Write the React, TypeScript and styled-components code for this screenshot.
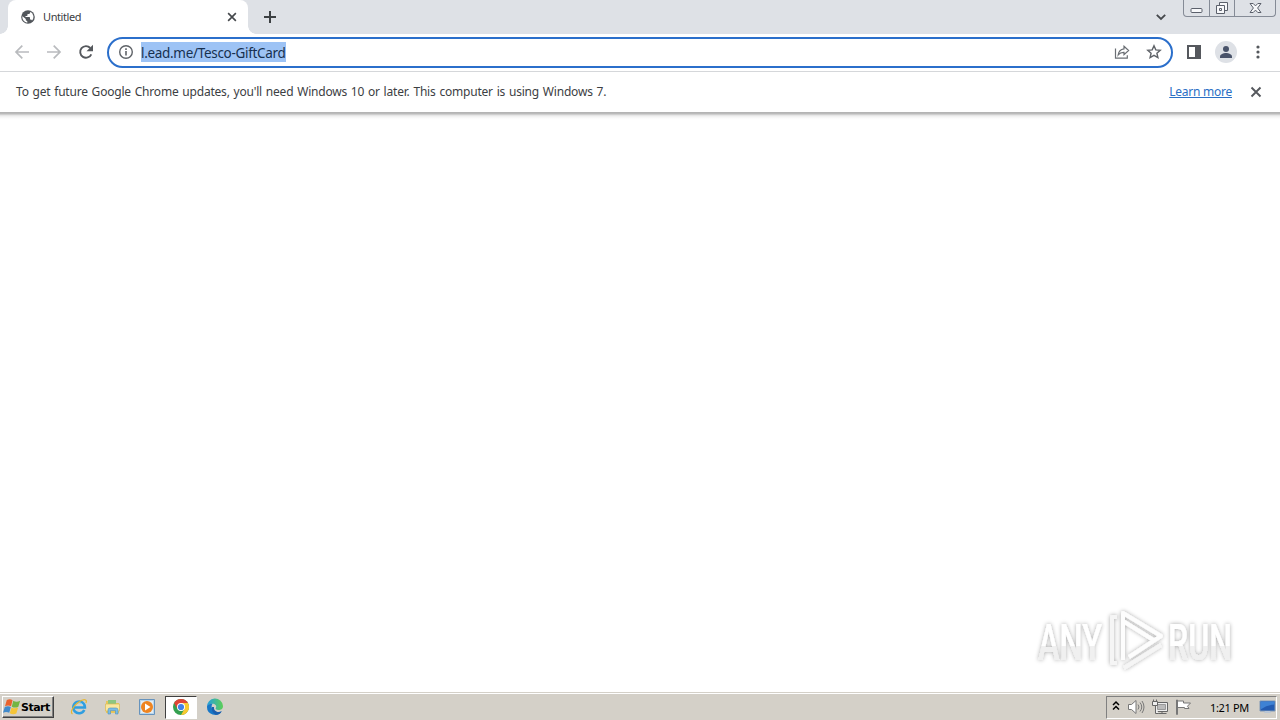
import React from "react";
import styled, { createGlobalStyle } from "styled-components";


const GlobalStyle = createGlobalStyle`
  * {
    box-sizing: border-box;
  }

  body {
    margin: 0;
    background: #fff;
    overflow: hidden;
    font-family: "Noto Sans", "Open Sans", sans-serif;
  }

  svg {
    display: block;
    flex: none;
  }
`;

const Screen = styled.div`
  width: 1280px;
  height: 720px;
  display: flex;
  flex-direction: column;
  background: #fff;
`;

const TabStrip = styled.div`
  height: 34px;
  flex: none;
  display: flex;
  align-items: flex-start;
  padding-left: 8px;
  background: #dee1e6;
`;

const Tab = styled.div`
  position: relative;
  width: 240px;
  height: 34px;
  display: flex;
  align-items: center;
  padding: 0 10px 0 13px;
  border-radius: 8px 8px 0 0;
  background: #fff;

  &::before,
  &::after {
    content: "";
    position: absolute;
    bottom: 0;
    width: 8px;
    height: 8px;
  }

  &::before {
    left: -8px;
    background: radial-gradient(circle at 0 0, #dee1e6 7.5px, #fff 8px);
  }

  &::after {
    right: -8px;
    background: radial-gradient(circle at 100% 0, #dee1e6 7.5px, #fff 8px);
  }
`;

const TabTitle = styled.span`
  flex: 1;
  margin-left: 8px;
  font-size: 11px;
  line-height: 16px;
  letter-spacing: -0.4px;
  color: #3c4043;
`;

const NewTab = styled.button`
  width: 28px;
  height: 34px;
  margin-left: 8px;
  padding: 0;
  border: 0;
  background: none;
  display: flex;
  align-items: center;
  justify-content: center;
`;

const TabSearch = styled.div`
  height: 34px;
  margin-left: auto;
  padding-right: 17px;
  display: flex;
  align-items: center;
`;

const WindowButtons = styled.div`
  width: 93px;
  height: 17px;
  margin-right: 4px;
  display: flex;
  border: 1px solid #858b96;
  border-top: 0;
  border-radius: 0 0 4px 4px;
`;

const WindowButton = styled.div<{ $width: number }>`
  width: ${p => p.$width}px;
  display: flex;
  justify-content: center;

  & + & {
    border-left: 1px solid #858b96;
  }
`;

const Toolbar = styled.div`
  height: 38px;
  flex: none;
  display: flex;
  align-items: center;
  padding: 0 12px 1px;
  border-bottom: 1px solid #d5d7da;
  background: #fff;
`;

const NavButtons = styled.div`
  display: flex;
  gap: 12px;
  margin-right: 11px;
`;

const Omnibox = styled.div`
  width: 1066px;
  height: 31px;
  display: flex;
  align-items: center;
  padding: 0 9px 0 9px;
  border: 2px solid #2b6fcb;
  border-radius: 16px;
  background: #fff;
`;

const Url = styled.span`
  height: 20px;
  width: 145px;
  margin: 0 auto 0 7px;
  font-size: 13.5px;
  line-height: 22px;
  letter-spacing: -0.31px;
  white-space: nowrap;
  color: #17304f;
  background: #9dc3f5;
`;

const OmniboxActions = styled.div`
  display: flex;
  gap: 16px;
`;

const ToolbarActions = styled.div`
  display: flex;
  align-items: center;
  margin-left: 12px;
`;

const Avatar = styled.div`
  width: 22px;
  height: 22px;
  margin: 0 12px 0 12px;
  border-radius: 50%;
  background: #dee1e6;
`;

const InfoBar = styled.div`
  height: 40px;
  flex: none;
  display: flex;
  align-items: center;
  padding: 0 17px 1px 16px;
  background: #fff;
`;

const InfoText = styled.span`
  font-size: 12px;
  letter-spacing: -0.2px;
  word-spacing: 0.9px;
  white-space: nowrap;
  color: #3c4043;
`;

const LearnMore = styled.a`
  margin: 0 17px 0 auto;
  font-size: 12px;
  letter-spacing: -0.25px;
  white-space: nowrap;
  text-decoration: underline;
  color: #2a6fc5;
`;

const Page = styled.main`
  position: relative;
  flex: 1;
  background: linear-gradient(#b4b4b4 0, #b4b4b4 1px, #c0c0c0 2px, #dedede 3px, #eee 4px, #fafafa 6px, #fff 8px);
`;

const Watermark = styled.div`
  position: absolute;
  right: 39px;
  bottom: 16px;
`;

const Taskbar = styled.div`
  height: 28px;
  flex: none;
  display: flex;
  align-items: center;
  padding: 1px 3px 0 2px;
  border-top: 1px solid #d4d0c8;
  box-shadow: inset 0 1px #fff;
  background: #d4d0c8;
`;

const StartButton = styled.button`
  width: 52px;
  height: 22px;
  display: flex;
  align-items: center;
  padding: 0;
  border: 1px solid;
  border-color: #fff #404040 #404040 #fff;
  box-shadow: inset -1px -1px #808080;
  background: #d4d0c8;
  font: bold 11px "DejaVu Sans", sans-serif;
  letter-spacing: -0.5px;
  color: #000;
`;

const TaskButtons = styled.div`
  display: flex;
  align-items: center;
  margin-left: 8px;
`;

const TaskButton = styled.div<{ $active?: boolean }>`
  width: ${p => (p.$active ? 32 : 34)}px;
  margin: ${p => (p.$active ? "0 1px" : "0")};
  height: 23px;
  display: flex;
  align-items: center;
  justify-content: center;
  border: 1px solid;
  border-color: ${p => (p.$active ? "#404040 #fff #fff #404040" : "transparent")};
  background: ${p => (p.$active ? "#fff" : "transparent")};
`;

const Tray = styled.div`
  width: 171px;
  height: 23px;
  margin-left: auto;
  display: flex;
  align-items: center;
  padding: 0 0 0 5px;
  border: 1px solid;
  border-color: #808080 #fff #fff #808080;
`;

const TrayIcons = styled.div`
  display: flex;
  align-items: center;
  gap: 7px;
`;

const Clock = styled.span`
  width: 40px;
  margin: 0 9px 0 auto;
  font-size: 11px;
  letter-spacing: -0.35px;
  white-space: nowrap;
  color: #000;
`;

const Cross = ({ size, color }: { size: number; color: string }) => (
  <svg width={size} height={size} viewBox="0 0 14 14" fill="none" stroke={color} strokeWidth="1.9">
    <path d="M2.5 2.5l9 9M11.5 2.5l-9 9" />
  </svg>
);

const Globe = () => (
  <svg width="14" height="14" viewBox="0 0 14 14">
    <circle cx="7" cy="7" r="6.8" fill="#53575c" />
    <path d="M1.5 6.2L4.8 9.1v1.2l1.5 1v1.4C3.3 12.3 1.3 9.9 1.3 7zM9.2 1.8v.8c0 .8-.6 1.3-1.3 1.3H6.5v1.3c0 .4-.3.7-.7.7H4.5V7h3.8c.4 0 .7.3.7.7v1.9h.7c.6 0 1.1.4 1.3.9a5.5 5.5 0 0 0-1.8-8.7z" fill="#fff" />
  </svg>
);

const ArrowIcon = ({ back }: { back?: boolean }) => (
  <svg width="20" height="20" viewBox="0 0 20 20" fill="none" stroke="#b9bbbe" strokeWidth="1.7">
    <path d={back ? "M17 10H4M10.3 3.7L4 10l6.3 6.3" : "M3 10h13M9.7 3.7L16 10l-6.3 6.3"} />
  </svg>
);

const ReloadIcon = () => (
  <svg width="20" height="20" viewBox="0 0 20 20">
    <path d="M15.3 12.3A5.8 5.8 0 1 1 14.3 6" fill="none" stroke="#55585d" strokeWidth="1.9" />
    <path d="M17 2.7v6.5h-6.5z" fill="#55585d" />
  </svg>
);

const InfoIcon = () => (
  <svg width="16" height="16" viewBox="0 0 16 16" fill="none" stroke="#5f6368" strokeWidth="1.4">
    <circle cx="8" cy="8" r="6.3" />
    <path d="M8 7v4.5M8 4.3v1.6" strokeWidth="1.6" />
  </svg>
);

const ShareIcon = () => (
  <svg width="16" height="16" viewBox="0 0 16 16" fill="none" stroke="#6b6f74" strokeWidth="1.2">
    <path d="M1.5 4.5v9.7h11.8v-3" />
    <path d="M10 2.3l4.6 4.2L10 10.6V8.3c-2.8-.1-4.5.9-5.8 2.6.4-3.2 2.3-5.6 5.8-6z" />
  </svg>
);

const StarIcon = () => (
  <svg width="16" height="16" viewBox="0 0 16 16" fill="none" stroke="#5f6368" strokeWidth="1.4">
    <path d="M8 1.8l1.8 4.1 4.4.4-3.3 2.9 1 4.3L8 11.3l-3.9 2.2 1-4.3-3.3-2.9 4.4-.4z" />
  </svg>
);

const AnyRunLogo = () => (
  <svg width="204" height="68" viewBox="0 0 204 68" overflow="visible">
    <defs>
      <linearGradient id="letters" x1="0" y1="0" x2="0" y2="1">
        <stop offset="0.56" stopColor="#fff" />
        <stop offset="0.56" stopColor="#f0f0f0" />
      </linearGradient>
      <filter id="halo" x="-10%" y="-10%" width="120%" height="120%">
        <feDropShadow dx="0" dy="0" stdDeviation="2" floodColor="#000" floodOpacity="0.35" />
      </filter>
    </defs>
    <g filter="url(#halo)" fill="none" strokeLinejoin="round">
      <g fill="url(#letters)" fontFamily="Roboto, sans-serif" fontSize="50" fontWeight="500">
        <text x="1" y="52" textLength="64" lengthAdjust="spacingAndGlyphs">ANY</text>
        <text x="131" y="52" textLength="64" lengthAdjust="spacingAndGlyphs">RUN</text>
      </g>
      <path d="M86 52V5l38 23-32 21M86 13l32 20" stroke="#fdfdfd" strokeWidth="4" />
      <path d="M80 9h-5v46h5M87 60l37-23" stroke="#f5f5f5" strokeWidth="4" />
    </g>
  </svg>
);

const WindowsFlag = () => (
  <svg width="18" height="18" viewBox="0 0 17 17">
    <path d="M3.6 2q3-1.6 5.400.2L7.600 7.800Q5 6.200 1.900 7.700z" fill="#e9622d" />
    <path d="M9.700 2.700q3 1.700 6.500 0l-1.700 5.500q-3 1.600-6.200 0z" fill="#73b543" />
    <path d="M1.700 8.400Q5 7 7.400 8.500L5.900 14Q3.200 12.400 0 13.900z" fill="#418acb" />
    <path d="M8.100 8.900q3 1.600 6.200.100l-1.700 5.600q-3 1.600-6.200-.2z" fill="#f5c538" />
  </svg>
);

const InternetExplorerIcon = () => (
  <svg width="18" height="18" viewBox="0 0 18 18" fill="none">
    <path d="M14.3 12a5.8 5.8 0 1 1 .6-2.500H4.500" stroke="#2f9ee0" strokeWidth="2.6" />
    <path d="M5 7a4.6 4.6 0 0 1 8 0" stroke="#8bd3f8" strokeWidth="1" />
    <path d="M2.500 16C-.5 14.500 3.200 8 8.500 4.300 13 1 17.700.5 16 5" stroke="#e7b62c" strokeWidth="1.2" />
  </svg>
);

const ExplorerIcon = () => (
  <svg width="18" height="18" viewBox="0 0 18 18">
    <path d="M2 3h5l1 2h7v10H2z" fill="#e8c65b" />
    <path d="M4 2h8v4H4z" fill="#8cc681" />
    <path d="M1.5 6h14v7h-14z" fill="#f9e7a0" stroke="#d9b954" strokeWidth=".7" />
    <path d="M4 16v-4q0-2 2-2h6q2 0 2 2v4h-2.5v-3.5h-5V16z" fill="#79bce6" stroke="#4f91bd" strokeWidth=".6" />
  </svg>
);

const MediaPlayerIcon = () => (
  <svg width="18" height="18" viewBox="0 0 18 18">
    <path d="M1.5 1.5h15v15h-15z" fill="#b9d6ec" stroke="#6693bd" />
    <path d="M3 3h12v12H3z" fill="#e4edf3" />
    <circle cx="9" cy="9" r="6" fill="#ee8420" />
    <path d="M7 5.5v7L12.5 9z" fill="#fff" />
  </svg>
);

const ChromeIcon = () => (
  <svg width="18" height="18" viewBox="0 0 18 18">
    <circle cx="9" cy="9" r="8" fill="#34a050" />
    <path d="M2.07 5A8 8 0 0 1 15.93 5H9L5.54 11z" fill="#e04436" />
    <path d="M15.93 5A8 8 0 0 1 9 17l3.46-6L9 5z" fill="#f9c92f" />
    <circle cx="9" cy="9" r="4" fill="#fff" />
    <circle cx="9" cy="9" r="3.1" fill="#4181e8" />
  </svg>
);

const EdgeIcon = () => (
  <svg width="18" height="18" viewBox="0 0 18 18">
    <defs>
      <linearGradient id="edgeTop" x1="0" y1="0" x2="1" y2="0">
        <stop offset="0" stopColor="#249fdf" />
        <stop offset="1" stopColor="#5dcf55" />
      </linearGradient>
    </defs>
    <path d="M1 9A8 8 0 0 1 17 8c0 3-2 4-4.5 4S9 11 10 9.5 9 5.8 6.5 5.8 1.5 7 1 9z" fill="url(#edgeTop)" />
    <path d="M1 8.5C1.5 6.5 4 5.5 6.5 5.8 4.5 8 6 13.5 10.5 14.3c2.3.4 4-.3 5.2-1.1A8 8 0 0 1 1 8.5z" fill="#1877c7" />
    <path d="M6 9c-.8 4 1.5 7 4.5 7.8 2.5-.2 4.2-1.5 5.2-3.6C11 15.5 7.5 12.5 8 9z" fill="#1b5fae" />
  </svg>
);

const TrayChevrons = () => (
  <svg width="8" height="14" viewBox="0 0 8 14" fill="none" stroke="#000" strokeWidth="1.5">
    <path d="M1 5l3-3 3 3M1 9.500l3-3 3 3" />
  </svg>
);

const SpeakerIcon = () => (
  <svg width="18" height="16" viewBox="0 0 18 16" fill="none" stroke="#777">
    <path d="M1.5 5.5h3L9 1.5v13l-4.500-4h-3z" fill="#fff" />
    <path d="M11 5.500q2 2.500 0 5M13 3.500q3.500 4.500 0 9M15 2q4 6 0 12" />
  </svg>
);

const NetworkIcon = () => (
  <svg width="16" height="16" viewBox="0 0 16 16" fill="#eee" stroke="#666">
    <path d="M3.5 3.5h12v9h-12z" />
    <path d="M5.500 5.500h8v5h-8z" fill="#bbb" stroke="#999" />
    <path d="M10 12.500v2M5.500 14.500h9" />
    <path d="M.5 2.500h5v4h-5zM1.500.5v2M4.500.5v2M3.500 6.500v8h3" />
  </svg>
);

const FlagIcon = () => (
  <svg width="17" height="16" viewBox="0 0 17 16" fill="#fff" stroke="#777">
    <path d="M2.500 2h6v2h7l-3 3.200 1.500 2.300H9.500v-1h-7z" />
    <path d="M1.500 1v14.500h1V1z" />
  </svg>
);

const DisplayIcon = () => (
  <svg width="17" height="16" viewBox="0 0 17 16">
    <path d="M1 2h15v10H1z" fill="#235bb1" stroke="#8098b5" />
    <path d="M1.5 2.5h14v3q-7 0-14 5z" fill="#3e82d4" />
    <path d="M6 12h5l1 2H5z" fill="#bac6d5" />
  </svg>
);

export default function App() {
  return (
    <>
      <GlobalStyle />
      <Screen>
        <TabStrip>
          <Tab>
            <Globe />
            <TabTitle>Untitled</TabTitle>
            <Cross size={12} color="#45484c" />
          </Tab>
          <NewTab>
            <svg width="14" height="14" viewBox="0 0 14 14" stroke="#3c4043" strokeWidth="2">
              <path d="M7 1v12M1 7h12" />
            </svg>
          </NewTab>
          <TabSearch>
            <svg width="10" height="8" viewBox="0 0 10 8" fill="none" stroke="#45484c" strokeWidth="1.8">
              <path d="M.8 1.8L5 6l4.2-4.2" />
            </svg>
          </TabSearch>
          <WindowButtons>
            <WindowButton $width={25}>
              <svg width="13" height="16" viewBox="0 0 13 16">
                <rect x="1" y="8.5" width="11" height="4" rx="1" fill="#f7f8fa" stroke="#5b606b" />
              </svg>
            </WindowButton>
            <WindowButton $width={25}>
              <svg width="14" height="16" viewBox="0 0 14 16" fill="#f7f8fa" stroke="#5b606b">
                <path d="M4.5 2.5h8v8h-8z" />
                <path d="M1.5 5.5h8v8h-8z" />
                <path d="M4.5 8.5h2v2h-2z" />
              </svg>
            </WindowButton>
            <WindowButton $width={41}>
              <svg width="13" height="16" viewBox="0 0 13 16">
                <path d="M1 3.5h3.2l2.3 2.4 2.3-2.4H12L8.6 8l3.4 4.5H8.8L6.5 10.1l-2.3 2.4H1L4.4 8z" fill="#f7f8fa" stroke="#5b606b" />
              </svg>
            </WindowButton>
          </WindowButtons>
        </TabStrip>

        <Toolbar>
          <NavButtons>
            <ArrowIcon back />
            <ArrowIcon />
            <ReloadIcon />
          </NavButtons>
          <Omnibox>
            <InfoIcon />
            <Url>l.ead.me/Tesco-GiftCard</Url>
            <OmniboxActions>
              <ShareIcon />
              <StarIcon />
            </OmniboxActions>
          </Omnibox>
          <ToolbarActions>
            <svg width="18" height="18" viewBox="0 0 18 18" fill="#55585d">
              <path d="M2 2h14v14H2zM4 4v10h6V4z" fillRule="evenodd" />
            </svg>
            <Avatar>
              <svg width="22" height="22" viewBox="0 0 22 22" fill="#49536a">
                <circle cx="11" cy="8" r="3" />
                <path d="M5 17v-1.5c0-2.3 3.5-3.5 6-3.5s6 1.2 6 3.5V17z" />
              </svg>
            </Avatar>
            <svg width="18" height="18" viewBox="0 0 18 18" fill="#55585d">
              <circle cx="9" cy="4" r="1.6" />
              <circle cx="9" cy="9" r="1.6" />
              <circle cx="9" cy="14" r="1.6" />
            </svg>
          </ToolbarActions>
        </Toolbar>

        <InfoBar>
          <InfoText>
            To get future Google Chrome updates, you'll need Windows 10 or later. This computer is using Windows 7.
          </InfoText>
          <LearnMore>Learn more</LearnMore>
          <Cross size={14} color="#55585d" />
        </InfoBar>

        <Page>
          <Watermark>
            <AnyRunLogo />
          </Watermark>
        </Page>

        <Taskbar>
          <StartButton>
            <WindowsFlag />
            Start
          </StartButton>
          <TaskButtons>
            <TaskButton><InternetExplorerIcon /></TaskButton>
            <TaskButton><ExplorerIcon /></TaskButton>
            <TaskButton><MediaPlayerIcon /></TaskButton>
            <TaskButton $active><ChromeIcon /></TaskButton>
            <TaskButton><EdgeIcon /></TaskButton>
          </TaskButtons>
          <Tray>
            <TrayIcons>
              <TrayChevrons />
              <SpeakerIcon />
              <NetworkIcon />
              <FlagIcon />
            </TrayIcons>
            <Clock>1:21 PM</Clock>
            <DisplayIcon />
          </Tray>
        </Taskbar>
      </Screen>
    </>
  );
}
